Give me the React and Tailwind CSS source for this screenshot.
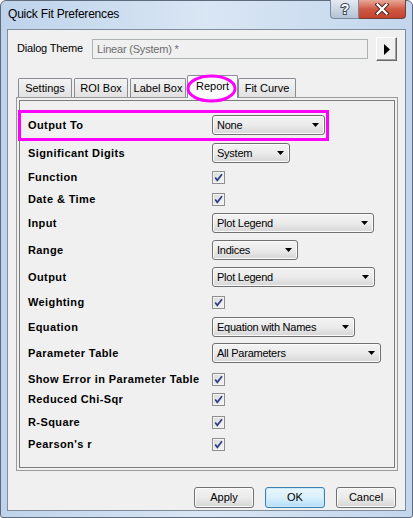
import React from "react";

function Combo({ w, text }) {
  return (
    <div
      className={`${w} h-[20px] rounded-[3px] border border-[#707070] bg-gradient-to-b from-[#f3f3f3] via-[#ebebeb] to-[#d6d6d6] shadow-[inset_0_0_0_1px_#fbfbfb] flex items-center justify-between pl-[4px] pr-[5px]`}
    >
      <span className="text-[11px] tracking-[-0.25px] leading-none text-black">{text}</span>
      <svg width="7" height="4" viewBox="0 0 7 4">
        <path d="M0 0H7L3.5 4Z" fill="#000" />
      </svg>
    </div>
  );
}

function Check() {
  return (
    <div className="w-[13px] h-[13px] border border-[#8e8f8f] bg-gradient-to-br from-[#d9d9d9] to-[#f6f6f6] shadow-[inset_0_0_0_1px_#f4f4f4]">
      <svg width="11" height="11" viewBox="0 0 11 11">
        <path d="M2.2 5.6L4.3 8.3L9 2.2" fill="none" stroke="#2b3d88" strokeWidth="1.7" />
      </svg>
    </div>
  );
}

function Tab({ label, className }) {
  return (
    <div
      className={`h-[20px] border border-b-0 border-[#898c95] rounded-t-[2px] bg-gradient-to-b from-[#f3f3f3] to-[#e1e1e1] flex items-center justify-center text-[11px] leading-none ${className}`}
    >
      {label}
    </div>
  );
}

function Btn({ label, primary }) {
  return (
    <div
      className={
        primary
          ? "w-[60px] h-[21px] rounded-[3px] border border-[#3c7fb1] bg-gradient-to-b from-[#eaf6fd] via-[#d9f0fc] to-[#b4def7] shadow-[inset_0_0_0_1px_#c9e8fa] flex items-center justify-center text-[11px] leading-none"
          : "w-[60px] h-[21px] rounded-[3px] border border-[#707070] bg-gradient-to-b from-[#f2f2f2] via-[#ebebeb] to-[#d5d5d5] shadow-[inset_0_0_0_1px_#fbfbfb] flex items-center justify-center text-[11px] leading-none"
      }
    >
      {label}
    </div>
  );
}

const rows = [
  { label: "Output To", combo: "None", w: "w-[113px]", mt: "mt-[14px]" },
  { label: "Significant Digits", combo: "System", w: "w-[78px]", mt: "mt-[8px]" },
  { label: "Function", mt: "mt-[8px]" },
  { label: "Date & Time", mt: "mt-[9px]" },
  { label: "Input", combo: "Plot Legend", w: "w-[162px]", mt: "mt-[7px]" },
  { label: "Range", combo: "Indices", w: "w-[86px]", mt: "mt-[7px]" },
  { label: "Output", combo: "Plot Legend", w: "w-[163px]", mt: "mt-[7px]" },
  { label: "Weighting", mt: "mt-[9px]" },
  { label: "Equation", combo: "Equation with Names", w: "w-[143px]", mt: "mt-[8px]" },
  { label: "Parameter Table", combo: "All Parameters", w: "w-[169px]", mt: "mt-[6px]" },
  { label: "Show Error in Parameter Table", mt: "mt-[10px]" },
  { label: "Reduced Chi-Sqr", mt: "mt-[7px]" },
  { label: "R-Square", mt: "mt-[10px]" },
  { label: "Pearson's r", mt: "mt-[9px]" },
];

export default function App() {
  return (
    <div className="relative w-[413px] h-[518px] overflow-hidden bg-white font-['Liberation_Sans',Arial,sans-serif] text-black">
      <div className="h-full flex flex-col rounded-t-[6px] rounded-b-[3px] border border-[#5d6b7c] bg-gradient-to-r from-[#bed3eb] via-[#d9e6f4] to-[#c3d6ed] px-[6px] pb-[6px]">
        {/* title bar */}
        <div className="h-[28px] flex justify-between items-start">
          <div className="pl-[1px] pt-[6px] text-[12px] tracking-[-0.2px] leading-[14px] text-black">
            Quick Fit Preferences
          </div>
          <div className="flex -mt-[1px]">
            <div className="w-[29px] h-[19px] border border-t-0 border-[#7b8a9c] rounded-bl-[4px] bg-gradient-to-b from-[#e4eaf1] via-[#ccd7e3] to-[#b3c2d4] flex items-center justify-center">
              <svg width="14" height="16" viewBox="0 0 14 16">
                <text
                  x="7"
                  y="13"
                  textAnchor="middle"
                  fontFamily="Liberation Sans, Arial, sans-serif"
                  fontWeight="bold"
                  fontSize="14"
                  fill="#ffffff"
                  stroke="#3d4b5c"
                  strokeWidth="2"
                  paintOrder="stroke"
                >
                  ?
                </text>
              </svg>
            </div>
            <div className="w-[47px] h-[19px] border border-t-0 border-l-0 border-[#6d4038] rounded-br-[4px] bg-gradient-to-b from-[#e8a898] via-[#d05a45] to-[#c2422f] flex items-center justify-center">
              <svg width="14" height="12" viewBox="0 0 14 12">
                <path d="M2.5 1.5L11.5 10.5M11.5 1.5L2.5 10.5" stroke="#4a2a26" strokeWidth="4.2" strokeLinecap="square" />
                <path d="M2.5 1.5L11.5 10.5M11.5 1.5L2.5 10.5" stroke="#ffffff" strokeWidth="2.2" strokeLinecap="square" />
              </svg>
            </div>
          </div>
        </div>

        {/* client area */}
        <div className="flex-1 border border-[#7f8c9b] bg-[#f0f0f0] flex flex-col">
          {/* dialog theme */}
          <div className="mt-[7px] h-[24px] flex items-center pl-[9px]">
            <div className="w-[75px] text-[11px] tracking-[-0.2px] leading-none pb-[2px]">Dialog Theme</div>
            <div className="w-[276px] h-[20px] border border-[#adb2b5] bg-[#f0f0f0] flex items-center pl-[4px] text-[11px] tracking-[-0.2px] leading-none text-[#6d6d6d]">
              Linear (System) *
            </div>
            <div className="ml-[8px] w-[21px] h-[24px] border border-t-[#ffffff] border-l-[#ffffff] border-r-[#696969] border-b-[#696969] bg-[#f0f0f0] shadow-[inset_-1px_-1px_0_#a0a0a0] flex items-center justify-center">
              <svg width="6" height="11" viewBox="0 0 6 11">
                <path d="M0 0L6 5.5L0 11Z" fill="#000" />
              </svg>
            </div>
          </div>

          {/* tabs + panel */}
          <div className="ml-[8px] mt-[14px] flex flex-col">
            <div className="h-[23px] flex items-end pl-[2px]">
              <Tab label="Settings" className="w-[54px]" />
              <Tab label="ROI Box" className="ml-[2px] w-[54px]" />
              <Tab label="Label Box" className="ml-[2px] w-[56px]" />
              <div className="relative z-10 ml-[1px] w-[51px] h-[23px] border border-b-0 border-[#898c95] rounded-t-[2px] bg-[#fbfbfb] flex items-center justify-center text-[11px] leading-none pb-[2px]">
                Report
              </div>
              <Tab label="Fit Curve" className="w-[58px]" />
            </div>
            <div className="-mt-[1px] w-[382px] h-[374px] border border-[#9a9a9a] p-[2px] bg-[#f0f0f0] flex">
              <div className="flex-1 border border-[#7c7c7c] pl-[8px] flex flex-col">
                {rows.map((r) => (
                  <div key={r.label} className={`${r.mt} flex items-center ${r.combo ? "h-[20px]" : "h-[13px]"}`}>
                    <div className="w-[184px] text-[11px] font-bold tracking-[0.4px] leading-none whitespace-nowrap">
                      {r.label}
                    </div>
                    {r.combo ? <Combo w={r.w} text={r.combo} /> : <Check />}
                  </div>
                ))}
              </div>
            </div>
          </div>

          {/* buttons */}
          <div className="mt-[16px] flex justify-end gap-[11px] pr-[9px]">
            <Btn label="Apply" />
            <Btn label="OK" primary />
            <Btn label="Cancel" />
          </div>
        </div>
      </div>

      {/* annotations */}
      <div className="absolute z-20 left-[18px] top-[110px] w-[311px] h-[31px] border-[3px] border-[#ff00ff]" />
      <svg className="absolute z-20 left-[186px] top-[74px]" width="51" height="29" viewBox="0 0 51 29">
        <ellipse cx="25.5" cy="14.5" rx="23.5" ry="12.5" fill="none" stroke="#ff00ff" strokeWidth="3" />
      </svg>
    </div>
  );
}
